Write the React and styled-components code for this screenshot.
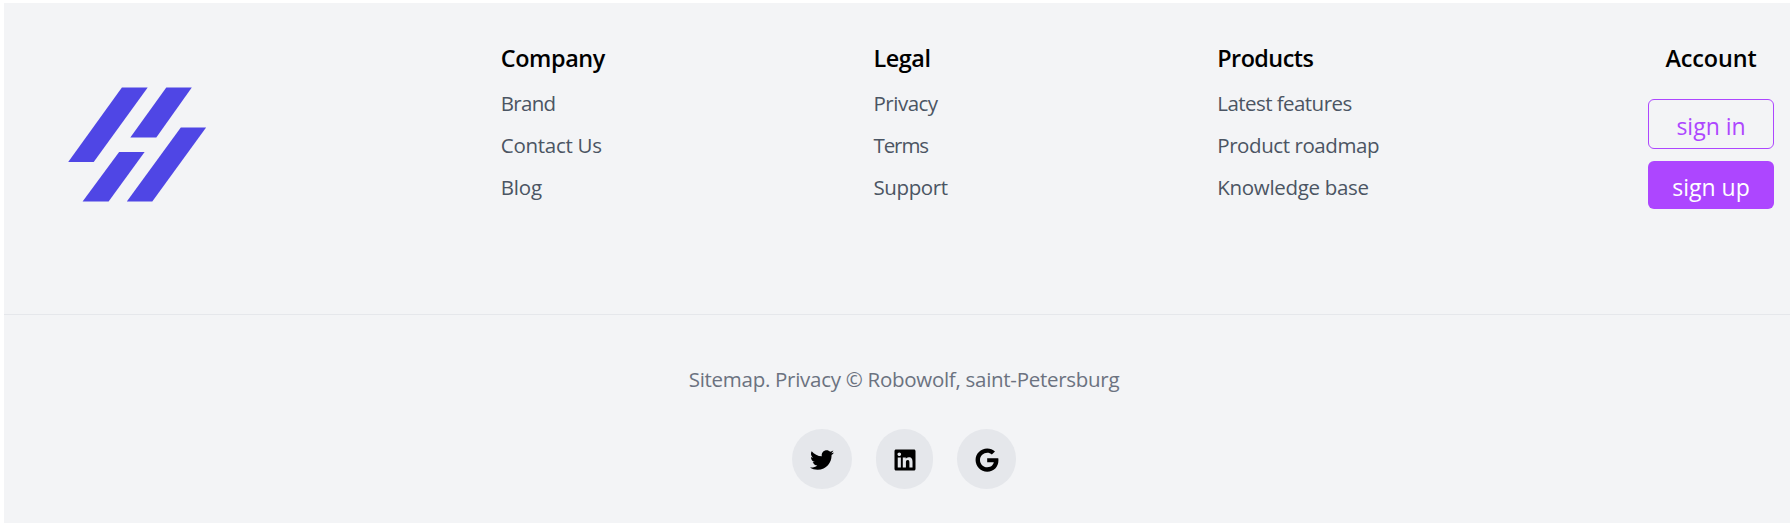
import React from "react";
import styled, { createGlobalStyle } from "styled-components";
import { FaTwitter, FaLinkedin, FaGoogle } from "react-icons/fa";

const GlobalStyle = createGlobalStyle`
  *, *::before, *::after { box-sizing: border-box; }
  body {
    margin: 0;
    background: #ffffff;
    font-family: "Segoe UI", "Open Sans", "Noto Sans", sans-serif;
  }
`;

const Footer = styled.footer`
  margin: 3px 0 0 4px;
  height: 520px;
  overflow: hidden;
  background: #f3f4f6;
`;

const Top = styled.div`
  display: flex;
  justify-content: space-between;
  align-items: flex-start;
  height: 312px;
  padding: 37px 16px 0;
  border-bottom: 1px solid #e5e7eb;
`;

const LogoBox = styled.div`
  width: 212px;
  padding: 47px 0 0 47px;
`;

const Logo = styled.svg`
  display: block;
  width: 140px;
  height: 116px;
`;

const Column = styled.nav`
  width: ${(p) => p.$width}px;
  white-space: nowrap;
`;

const Heading = styled.h3`
  margin: 0;
  font-size: 23.4px;
  line-height: 36px;
  font-weight: 600;
  letter-spacing: ${(p) => p.$tracking || 0}px;
  color: #000000;
`;

const Links = styled.ul`
  margin: 6px 0 0;
  padding: 0;
  list-style: none;
`;

const Item = styled.li`
  height: 42px;
  line-height: 42px;
  font-size: 20.5px;
`;

const Link = styled.a`
  color: #4b5563;
  letter-spacing: ${(p) => p.$tracking || 0}px;
`;

const Account = styled.div`
  display: flex;
  flex-direction: column;
  align-items: center;
  width: 126px;
`;

const Button = styled.button`
  width: 126px;
  height: ${(p) => (p.$filled ? 48 : 50)}px;
  margin-top: ${(p) => (p.$filled ? 12 : 23)}px;
  padding: ${(p) => (p.$filled ? 3 : 4)}px 0 0;
  border: ${(p) => (p.$filled ? "none" : "1px solid #ad46ff")};
  border-radius: 6px;
  background: ${(p) => (p.$filled ? "#ad46ff" : "transparent")};
  color: ${(p) => (p.$filled ? "#ffffff" : "#ad46ff")};
  font-family: inherit;
  font-size: 23px;
  line-height: 36px;
`;

const Bottom = styled.div`
  display: flex;
  flex-direction: column;
  align-items: center;
  padding-top: 48px;
  padding-left: 14px;
`;

const Copyright = styled.p`
  margin: 0;
  color: #6b7280;
  font-size: 20.5px;
  letter-spacing: -0.28px;
  line-height: 32px;
  white-space: nowrap;
`;

const Socials = styled.div`
  display: flex;
  gap: 24px;
  margin-top: 34px;
`;

const Social = styled.a`
  display: flex;
  align-items: center;
  justify-content: center;
  width: ${(p) => p.$width}px;
  height: 60px;
  padding-top: 1px;
  border-radius: 9999px;
  background: #e5e7eb;
  color: #000000;

  svg { height: 24px; width: auto; }
`;

const columns = [
  {
    title: "Company", tracking: -0.4, width: 104,
    links: [["Brand", -0.7], ["Contact Us", -0.27], ["Blog", -0.2]],
  },
  {
    title: "Legal", tracking: -0.45, width: 75,
    links: [["Privacy", -0.5], ["Terms", -1.1], ["Support", -0.4]],
  },
  {
    title: "Products", tracking: -0.55, width: 162,
    links: [["Latest features", -0.55], ["Product roadmap", -0.42], ["Knowledge base", -0.3]],
  },
];

const socials = [
  { name: "Twitter", Icon: FaTwitter, width: 60 },
  { name: "LinkedIn", Icon: FaLinkedin, width: 57 },
  { name: "Google", Icon: FaGoogle, width: 59 },
];

export default function App() {
  return (
    <>
      <GlobalStyle />
      <Footer>
        <Top>
          <LogoBox>
            <Logo viewBox="0 0 140 116" fill="#4f46e5" aria-hidden="true">
              <path d="M54.9 .5H80.7L26.7 75H1.2Z" />
              <path d="M99.3 .5H124.8L89.3 50.5H63.3Z" />
              <path d="M113.8 40.5H139.1L85.3 114.5H59.8Z" />
              <path d="M52.1 65H77.6L41.6 114.5H15.6Z" />
            </Logo>
          </LogoBox>
          {columns.map((c) => (
            <Column key={c.title} $width={c.width}>
              <Heading $tracking={c.tracking}>{c.title}</Heading>
              <Links>
                {c.links.map(([label, tracking]) => (
                  <Item key={label}><Link $tracking={tracking}>{label}</Link></Item>
                ))}
              </Links>
            </Column>
          ))}
          <Account>
            <Heading $tracking={-0.1}>Account</Heading>
            <Button>sign in</Button>
            <Button $filled>sign up</Button>
          </Account>
        </Top>
        <Bottom>
          <Copyright>Sitemap. Privacy © Robowolf, saint-Petersburg</Copyright>
          <Socials>
            {socials.map(({ name, Icon, width }) => (
              <Social key={name} aria-label={name} $width={width}><Icon /></Social>
            ))}
          </Socials>
        </Bottom>
      </Footer>
    </>
  );
}
